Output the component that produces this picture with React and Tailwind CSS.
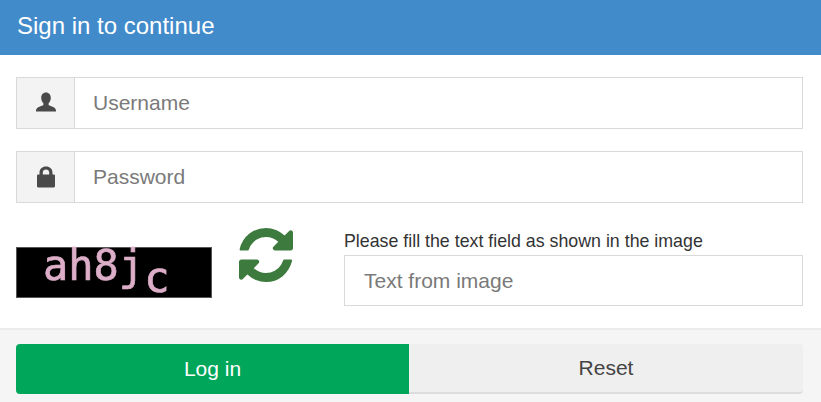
function UserIcon() {
    return (
        <svg width="22" height="22" viewBox="0 0 22 22" fill="#4a4a4a">
            <path d="M11 .5c-3 0-4.800 2.300-4.800 5.300 0 2.400 1 4.300 2.200 5.400v1.900c-1.400 1-6.800 1.900-7.400 5.100v1.300h20v-1.300c-.6-3.200-6-4.100-7.400-5.100v-1.900c1.200-1.100 2.200-3 2.200-5.400C15.800 2.800 14 .5 11 .5z" />
        </svg>
    );
}

function LockIcon() {
    return (
        <svg width="22" height="22" viewBox="0 0 22 22" fill="#4a4a4a">
            <path d="M4.500 8.500V6.500C4.500 3 7.200.5 11 .5s6.500 2.500 6.500 6v2h1.300c.7 0 1.200.5 1.200 1.200v10.600c0 .7-.5 1.200-1.200 1.200H3.200c-.7 0-1.200-.5-1.200-1.200V9.700c0-.7.5-1.200 1.200-1.200h1.300zm3.300 0h6.400v-2c0-1.700-1.400-2.900-3.200-2.900S7.800 4.800 7.800 6.500v2z" />
        </svg>
    );
}

function RefreshIcon() {
    return (
        <svg width="54" height="54" viewBox="0 0 1536 1536" fill="#3d7a3d">
            <path d="M1511 928q0 5-1 7-64 268-268 434.500t-478 166.500q-146 0-282.500-55t-243.500-157l-129 129q-19 19-45 19t-45-19-19-45v-448q0-26 19-45t45-19h448q26 0 45 19t19 45-19 45l-137 137q71 66 161 102t187 36q134 0 250-65t186-179q11-17 53-117 8-23 30-23h192q13 0 22.500 9.500t9.500 22.500zm25-800v448q0 26-19 45t-45 19h-448q-26 0-45-19t-19-45 19-45l138-138q-148-137-349-137-134 0-250 65t-186 179q-11 17-53 117-8 23-30 23h-199q-13 0-22.500-9.500t-9.500-22.500v-7q65-268 270-434.500t480-166.500q146 0 284 55.500t245 156.500l130-129q19-19 45-19t45 19 19 45z" />
        </svg>
    );
}

function InputRow({ icon, placeholder }) {
    return (
        <div className="flex h-[52px] border border-[#d9d9d9] bg-white">
            <span className="flex w-[58px] items-center justify-center border-r border-[#d9d9d9] bg-[#f3f3f3]">
                {icon}
            </span>
            <input
                placeholder={placeholder}
                className="min-w-0 flex-1 bg-white px-[18px] pb-px text-[21px] text-[#555555] outline-none placeholder:text-[#7a7a7a]"
            />
        </div>
    );
}

export default function App() {
    return (
        <div className="h-[402px] w-[821px] overflow-hidden bg-white font-['Liberation_Sans',Arial,sans-serif]">
            {/* Cabecera */}
            <div className="flex h-[55px] items-center bg-[#428bca] px-[17px] pb-[3px] text-[24px] text-white">
                Sign in to continue
            </div>

            {/* Formulario */}
            <div className="flex h-[273px] flex-col gap-[22px] pl-4 pr-[18px] pt-[22px]">
                <InputRow icon={<UserIcon />} placeholder="Username" />
                <InputRow icon={<LockIcon />} placeholder="Password" />

                <div className="flex items-start">
                    <div className="mt-[22px] flex h-[51px] w-[196px] items-start border border-[#555555] bg-black pl-[26px] font-['DejaVu_Sans_Mono',monospace] text-[42px] leading-[36px] text-[#dcaec8] blur-[0.4px] [-webkit-text-stroke:0.7px_#dcaec8]">
                        <span>ah8</span>
                        <span>j</span>
                        <span className="translate-y-[12px]">c</span>
                    </div>
                    <div className="ml-[27px] mt-[3px]">
                        <RefreshIcon />
                    </div>
                    <div className="ml-[51px] flex flex-1 flex-col pt-[4px]">
                        <label className="h-[26px] text-[17.800px] leading-[24px] text-[#333333]">
                            Please fill the text field as shown in the image
                        </label>
                        <input
                            placeholder="Text from image"
                            className="h-[51px] border border-[#d9d9d9] bg-white px-[19px] text-[21px] text-[#555555] outline-none placeholder:text-[#7a7a7a]"
                        />
                    </div>
                </div>
            </div>

            {/* Acciones */}
            <div className="flex h-[74px] border-t-2 border-[#ececec] bg-[#f5f5f5] pl-4 pr-[18px] pt-[14px]">
                <button type="button" className="h-[50px] w-[393px] rounded-l bg-[#00a65a] text-[21px] text-white">
                    Log in
                </button>
                <button
                    type="button"
                    className="h-[50px] flex-1 rounded-r border-b-2 border-[#dddddd] bg-[#efefef] text-[21px] text-[#444444]"
                >
                    Reset
                </button>
            </div>
        </div>
    );
}
